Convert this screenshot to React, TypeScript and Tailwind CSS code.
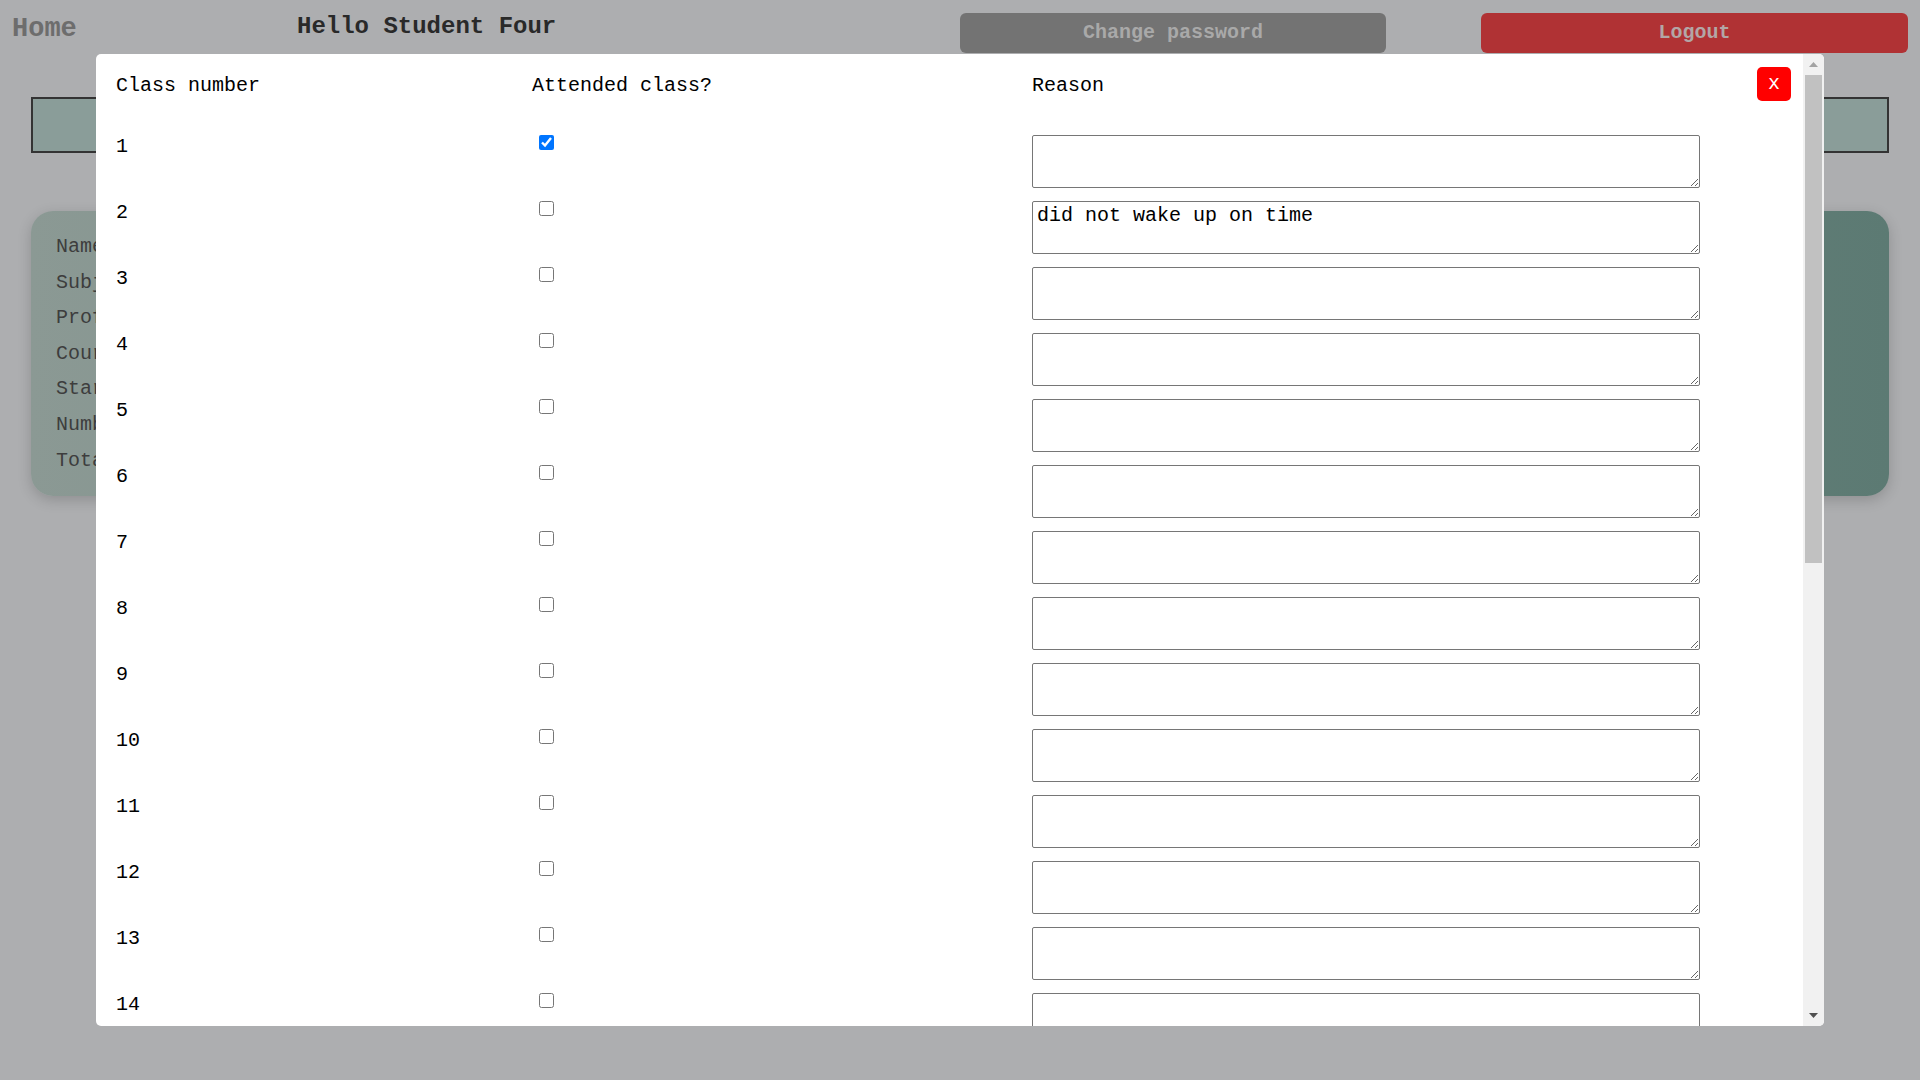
import React, { useState } from 'react'

const CARD_LABELS = [
  'Name: Algebra II',
  'Subject: Mathematics',
  'Professor: Teacher One',
  'Course: 2nd year',
  'Start date: 2023-09-04',
  'Number of classes: 27',
  'Total absences: 1',
]

const TOTAL_CLASSES = 27

function AttendanceRow({ index, attended, reason }: { index: number; attended: boolean; reason: string }) {
  const [checked, setChecked] = useState(attended)
  const [text, setText] = useState(reason)

  return (
    <div className="flex items-start h-[53px] mb-[13px]">
      <div className="w-[416px] leading-[23px]">{index}</div>
      <div className="w-[500px]">
        <input
          type="checkbox"
          checked={checked}
          onChange={e => setChecked(e.target.checked)}
          className="block ml-[7px] w-[15px] h-[15px] m-0 accent-[#0075ff]"
        />
      </div>
      <textarea
        value={text}
        onChange={e => setText(e.target.value)}
        className="block w-[668px] h-[53px] py-[2px] px-[4px] border border-[#767676] rounded-[2px] text-[20px] leading-[23px] resize bg-white text-black"
      />
    </div>
  )
}

// scrollbar drawn by hand, the headless browser hides native ones
function FakeScrollbar() {
  return (
    <div className="flex flex-col w-[21px] h-full bg-[#f1f1f1] shrink-0">
      <div className="flex items-center justify-center h-[21px]">
        <svg width="9" height="5" viewBox="0 0 9 5"><path d="M4.5 0L9 5H0z" fill="#a3a3a3" /></svg>
      </div>
      <div className="flex-1 px-[2px]">
        <div className="h-[488px] bg-[#c1c1c1]" />
      </div>
      <div className="flex items-center justify-center h-[21px]">
        <svg width="9" height="5" viewBox="0 0 9 5"><path d="M0 0H9L4.5 5z" fill="#505050" /></svg>
      </div>
    </div>
  )
}

export default function App() {
  const rows = Array.from({ length: TOTAL_CLASSES }, (_, i) => ({
    index: i + 1,
    attended: i === 0,
    reason: i === 1 ? 'did not wake up on time' : '',
  }))

  return (
    <div className="relative w-[1920px] h-[1080px] overflow-hidden bg-[#adaeb0] font-['Liberation_Mono','Courier_New',monospace] text-[20px]">
      {/* Header */}
      <header className="flex items-start h-[54px]">
        <div className="w-[297px] pl-[12px] pt-[13px]">
          <a className="block text-[27px] leading-[32px] font-bold text-[#6d6d6d]">Home</a>
        </div>
        <div className="w-[663px] pt-[13px]">
          <h2 className="text-[24px] leading-[28px] font-bold text-[#292929]">Hello Student Four</h2>
        </div>
        <button className="mt-[13px] w-[426px] h-[40px] rounded-[6px] bg-[#737373] text-[#a9a9a9] font-bold">
          Change password
        </button>
        <div className="w-[95px]" />
        <button className="mt-[13px] w-[427px] h-[40px] rounded-[6px] bg-[#b03234] text-[#b3a6a6] font-bold">
          Logout
        </button>
      </header>

      {/* Page content (behind the modal) */}
      <div className="mt-[43px] ml-[31px] w-[1858px] h-[56px] border-2 border-[#333333] bg-[#8a9d99]" />
      <div className="mt-[58px] ml-[31px] w-[1858px] h-[285px] rounded-[22px] bg-linear-to-r from-[#8b9994] to-[#5c7a73] shadow-[0_4px_14px_rgba(0,0,0,0.18)] pl-[25px] pt-[18px]">
        {CARD_LABELS.map(label => (
          <div key={label} className="leading-[35.6px] text-[#3d3d3d]">{label}</div>
        ))}
      </div>

      {/* Attendance modal */}
      <div className="absolute left-[96px] top-[54px] w-[1728px] h-[972px] bg-white rounded-[5px] overflow-hidden flex text-black">
        <div className="flex-1 overflow-y-auto [scrollbar-width:none] pl-[20px] pr-[12px] pt-[13px]">
          <div className="flex items-center h-[34px] leading-[23px]">
            <div className="w-[416px] pt-[2px]">Class number</div>
            <div className="w-[500px] pt-[2px]">Attended class?</div>
            <div className="flex-1 pt-[2px]">Reason</div>
            <button className="w-[34px] h-[34px] rounded-[5px] bg-[#ff0000] text-white text-[20px] leading-none">x</button>
          </div>

          <div className="mt-[34px]">
            {rows.map(r => (
              <AttendanceRow key={r.index} index={r.index} attended={r.attended} reason={r.reason} />
            ))}
          </div>
        </div>
        <FakeScrollbar />
      </div>
    </div>
  )
}
